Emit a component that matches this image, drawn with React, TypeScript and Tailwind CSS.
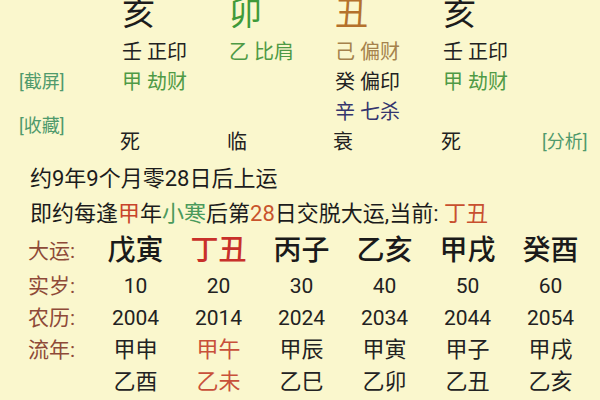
const font = { fontFamily: 'Roboto, "Noto Sans CJK SC", sans-serif' }

const stems = [
  { ch: "亥", color: "text-[#1c1c1c]" },
  { ch: "卯", color: "text-[#3f9a3a]" },
  { ch: "丑", color: "text-[#b4712c]" },
  { ch: "亥", color: "text-[#1c1c1c]" },
]

// hidden stems per pillar, [stem, god, colour]
const hidden: [string, string, string][][] = [
  [["壬", "正印", "text-[#222]"], ["甲", "劫财", "text-[#4f9a45]"]],
  [["乙", "比肩", "text-[#4f9a45]"]],
  [["己", "偏财", "text-[#a5824c]"], ["癸", "偏印", "text-[#222]"], ["辛", "七杀", "text-[#35356e]"]],
  [["壬", "正印", "text-[#222]"], ["甲", "劫财", "text-[#4f9a45]"]],
]

const phases = ["死", "临", "衰", "死"]

const dayun = [
  { gz: "戊寅", age: 10, year: 2004, a: "甲申", b: "乙酉", cur: false },
  { gz: "丁丑", age: 20, year: 2014, a: "甲午", b: "乙未", cur: true },
  { gz: "丙子", age: 30, year: 2024, a: "甲辰", b: "乙巳", cur: false },
  { gz: "乙亥", age: 40, year: 2034, a: "甲寅", b: "乙卯", cur: false },
  { gz: "甲戌", age: 50, year: 2044, a: "甲子", b: "乙丑", cur: false },
  { gz: "癸酉", age: 60, year: 2054, a: "甲戌", b: "乙亥", cur: false },
]

export default function App() {
  return (
    <div className="w-[600px] h-[400px] overflow-hidden bg-[#faf7cd] text-[#1c1c1c]" style={font}>
      {/* Pillars */}
      <div className="grid grid-cols-[122px_107px_106px_108px_99px_1fr] grid-rows-[39px_30px_30px_30px_30px] -mt-[2px]">
        <div />
        {stems.map((s, i) => (
          <div key={i} className={`text-[33px] leading-[32px] ${s.color}`}>{s.ch}</div>
        ))}
        <div />

        {[0, 1, 2].map((r) => (
          <div key={r} className="contents">
            <div className="pl-[19px] text-[18px] leading-[30px] text-[#4f9a6c]">
              {r === 1 && <span>[截屏]</span>}
              {r === 2 && <span className="block mt-[14px]">[收藏]</span>}
            </div>
            {hidden.map((col, i) => {
              const h = col[r]
              return (
                <div key={i} className={`text-[20px] leading-[30px] whitespace-nowrap ${h ? h[2] : ""}`}>
                  {h && (
                    <>
                      {h[0]}
                      <span className="ml-[5px]">{h[1]}</span>
                    </>
                  )}
                </div>
              )
            })}
            <div />
          </div>
        ))}

        <div />
        {phases.map((p, i) => (
          <div key={i} className="text-[20px] leading-[30px] -ml-[2px] text-[#222]">{p}</div>
        ))}
        <div className="text-[18px] leading-[30px] text-[#4f9a6c]">[分析]</div>
      </div>

      {/* Start of luck */}
      <div className="mt-[4px] pl-[30px] text-[22px] leading-[35px] text-[#1c1c1c] whitespace-nowrap">
        <div>约9年9个月零28日后上运</div>
        <div>
          即约每逢<span className="text-[#c8442c]">甲</span>年<span className="text-[#4a9a5c]">小寒</span>后第
          <span className="text-[#c8542c]">28</span>日交脱大运,当前: <span className="text-[#c8502f]">丁丑</span>
        </div>
      </div>

      {/* Da yun table */}
      <div className="mt-[1px] grid grid-cols-[94px_83px_83px_83px_83px_83px_83px] grid-rows-[38px_32px_32px_32px_32px] text-center whitespace-nowrap">
        <div className="pl-[28px] text-left text-[21px] leading-[38px] text-[#8e4a38]">大运:</div>
        {dayun.map((d) => (
          <div key={d.gz} className={`text-[28px] leading-[38px] font-medium ${d.cur ? "text-[#c8302a]" : "text-[#1a1a1a]"}`}>
            {d.gz}
          </div>
        ))}

        <div className="pl-[28px] text-left text-[21px] leading-[32px] text-[#8e4a38]">实岁:</div>
        {dayun.map((d) => (
          <div key={d.gz} className="text-[21px] leading-[32px] text-[#222]">{d.age}</div>
        ))}

        <div className="pl-[28px] text-left text-[21px] leading-[32px] text-[#8e4a38]">农历:</div>
        {dayun.map((d) => (
          <div key={d.gz} className="text-[21px] leading-[32px] text-[#222]">{d.year}</div>
        ))}

        <div className="pl-[28px] text-left text-[21px] leading-[32px] text-[#8e4a38]">流年:</div>
        {dayun.map((d) => (
          <div key={d.gz} className={`text-[22px] leading-[32px] ${d.cur ? "text-[#c8503a]" : "text-[#222]"}`}>{d.a}</div>
        ))}

        <div />
        {dayun.map((d) => (
          <div key={d.gz} className={`text-[22px] leading-[32px] ${d.cur ? "text-[#c8503a]" : "text-[#222]"}`}>{d.b}</div>
        ))}
      </div>
    </div>
  )
}
